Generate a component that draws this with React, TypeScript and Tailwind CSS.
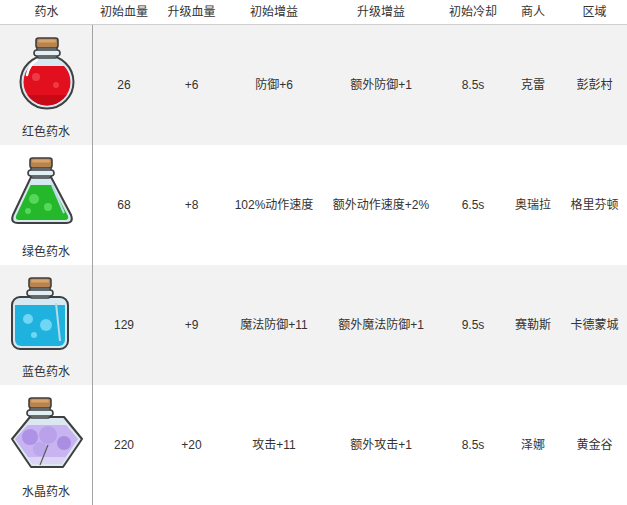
import type { ReactElement } from "react";

type Potion = {
  name: string;
  kind: "red" | "green" | "blue" | "crystal";
  hp: string;
  hpUp: string;
  buff: string;
  buffUp: string;
  cd: string;
  npc: string;
  area: string;
};

const potions: Potion[] = [
  { name: "红色药水", kind: "red", hp: "26", hpUp: "+6", buff: "防御+6", buffUp: "额外防御+1", cd: "8.5s", npc: "克雷", area: "彭彭村" },
  { name: "绿色药水", kind: "green", hp: "68", hpUp: "+8", buff: "102%动作速度", buffUp: "额外动作速度+2%", cd: "6.5s", npc: "奥瑞拉", area: "格里芬顿" },
  { name: "蓝色药水", kind: "blue", hp: "129", hpUp: "+9", buff: "魔法防御+11", buffUp: "额外魔法防御+1", cd: "9.5s", npc: "赛勒斯", area: "卡德蒙城" },
  { name: "水晶药水", kind: "crystal", hp: "220", hpUp: "+20", buff: "攻击+11", buffUp: "额外攻击+1", cd: "8.5s", npc: "泽娜", area: "黄金谷" },
];

const headers = ["药水", "初始血量", "升级血量", "初始增益", "升级增益", "初始冷却", "商人", "区域"];

const cols = "grid grid-cols-[93px_62px_73px_92px_122px_62px_58px_65px]";

// shared stopper + neck, drawn over the bottle body
const Top = ({ x }: { x: number }): ReactElement => (
  <g stroke="#3f3f3f" strokeWidth="1.6">
    <rect x={x + 3} y="11" width="20" height="12" rx="2" fill="#cfe5ef" />
    <rect x={x} y="15" width="26" height="6" rx="3" fill="#e2f0f6" />
    <rect x={x + 2} y="3" width="22" height="10" rx="2.5" fill="#b7834f" />
    <rect x={x + 4} y="4.5" width="18" height="3" rx="1.5" fill="#d8a46c" stroke="none" />
  </g>
);

const Bottle = ({ kind }: { kind: Potion["kind"] }): ReactElement => {
  if (kind === "red") {
    return (
      <svg width="80" height="86" viewBox="0 0 80 86">
        <defs>
          <clipPath id="cr">
            <circle cx="41" cy="47" r="23.5" />
          </clipPath>
        </defs>
        <circle cx="41" cy="47" r="26.5" fill="#d6e8f1" stroke="#3f3f3f" strokeWidth="2" />
        <g clipPath="url(#cr)">
          <rect x="10" y="31" width="62" height="45" fill="#e2101e" />
          <rect x="10" y="60" width="62" height="20" fill="#c80a16" />
          <circle cx="30" cy="42" r="4" fill="#ee3a46" />
          <circle cx="50" cy="50" r="3" fill="#ee3a46" />
        </g>
        <path d="M21 40 Q23 30 31 25" stroke="#ffffff" strokeWidth="2.5" fill="none" strokeLinecap="round" />
        <Top x={28} />
      </svg>
    );
  }
  if (kind === "green") {
    const body = "M25 22 L45 22 L65 60 Q68 68 60 68 L12 68 Q4 68 7 60 Z";
    return (
      <svg width="80" height="86" viewBox="0 0 80 86">
        <defs>
          <clipPath id="cg">
            <path d="M27 25 L43 25 L62 61 Q63 65 59 65 L13 65 Q9 65 10 61 Z" />
          </clipPath>
        </defs>
        <path d={body} fill="#d6e8f1" stroke="#3f3f3f" strokeWidth="2" />
        <g clipPath="url(#cg)">
          <rect x="5" y="30" width="62" height="40" fill="#24b82a" />
          <circle cx="28" cy="44" r="5" fill="#55d85a" />
          <circle cx="42" cy="52" r="4" fill="#55d85a" />
          <circle cx="22" cy="56" r="3" fill="#55d85a" />
        </g>
        <path d="M46 30 L58 58" stroke="#b9dbe8" strokeWidth="2" />
        <Top x={22} />
      </svg>
    );
  }
  if (kind === "blue") {
    return (
      <svg width="80" height="86" viewBox="0 0 80 86">
        <defs>
          <clipPath id="cb">
            <rect x="9" y="25" width="50" height="46" rx="6" />
          </clipPath>
        </defs>
        <rect x="6" y="22" width="56" height="52" rx="8" fill="#d6e8f1" stroke="#3f3f3f" strokeWidth="2" />
        <g clipPath="url(#cb)">
          <rect x="6" y="30" width="56" height="44" fill="#1fb2df" />
          <circle cx="22" cy="44" r="5" fill="#6fd6f4" />
          <circle cx="40" cy="50" r="6" fill="#6fd6f4" />
          <circle cx="28" cy="60" r="3" fill="#6fd6f4" />
        </g>
        <path d="M50 28 L54 66" stroke="#b9dbe8" strokeWidth="2" />
        <Top x={21} />
      </svg>
    );
  }
  return (
    <svg width="80" height="86" viewBox="0 0 80 86">
      <defs>
        <clipPath id="cc">
          <path d="M26 25 L56 25 L72 44 L55 69 L27 69 L9 44 Z" />
        </clipPath>
      </defs>
      <path d="M24 22 L58 22 L76 44 L57 72 L25 72 L6 44 Z" fill="#dbe8f2" stroke="#3f3f3f" strokeWidth="2" strokeLinejoin="round" />
      <g clipPath="url(#cc)">
        <rect x="6" y="30" width="70" height="42" fill="#c7b4f0" />
        <circle cx="24" cy="42" r="8" fill="#ad92e6" />
        <circle cx="42" cy="40" r="9" fill="#b9a2ea" />
        <circle cx="58" cy="48" r="7" fill="#a98ee2" />
        <circle cx="34" cy="54" r="7" fill="#bca6ec" />
        <rect x="6" y="62" width="70" height="10" fill="#dcd4f4" />
      </g>
      <path d="M42 50 L34 70" stroke="#5a5a5a" strokeWidth="1.2" />
      <Top x={21} />
    </svg>
  );
};

export default function App(): ReactElement {
  return (
    <div
      className="w-[627px] h-[505px] overflow-hidden bg-white text-[12px] text-[#333333]"
      style={{ fontFamily: '"Liberation Sans", "Noto Sans CJK SC", sans-serif' }}
    >
      <div className={`${cols} h-[25px] border-b border-[#cfcfcf] items-center text-center`}>
        {headers.map((h) => (
          <div key={h}>{h}</div>
        ))}
      </div>
      {potions.map((p, i) => (
        <div key={p.name} className={`${cols} h-[120px] text-center items-center ${i % 2 === 0 ? "bg-[#f2f2f2]" : "bg-white"}`}>
          <div className="flex h-full flex-col items-center border-r border-[#a3a3a3]">
            <div className="mt-[10px]">
              <Bottle kind={p.kind} />
            </div>
            <div className="mt-auto mb-[5px] leading-[16px]">{p.name}</div>
          </div>
          <div>{p.hp}</div>
          <div>{p.hpUp}</div>
          <div>{p.buff}</div>
          <div>{p.buffUp}</div>
          <div>{p.cd}</div>
          <div>{p.npc}</div>
          <div>{p.area}</div>
        </div>
      ))}
    </div>
  );
}
